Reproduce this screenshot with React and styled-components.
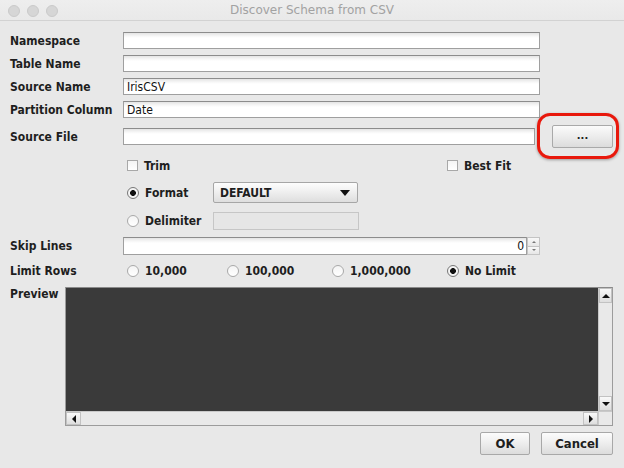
import React from "react";
import styled, { createGlobalStyle } from "styled-components";

const Global = createGlobalStyle`
  html, body { margin: 0; padding: 0; background: #e8e8e8; }
  body { width: 624px; height: 468px; overflow: hidden; }
  * { box-sizing: border-box; }
`;

const UI = `"DejaVu Sans Condensed", "DejaVu Sans", "Liberation Sans", sans-serif`;

const Window = styled.div`
  position: relative;
  width: 624px;
  height: 468px;
  background: #e8e8e8;
  font-family: ${UI};
  font-stretch: condensed;
  color: #1e1e1e;
`;

const TitleBar = styled.div`
  height: 21px;
  display: flex;
  align-items: center;
  justify-content: center;
  position: relative;
  background: linear-gradient(#eeeeee, #e9e9e9);
  border-bottom: 1px solid #d2d2d2;
`;

const Lights = styled.div`
  position: absolute;
  left: 8px;
  top: 5px;
  display: flex;
  gap: 7px;
`;

const Light = styled.span`
  width: 12px;
  height: 12px;
  border-radius: 50%;
  background: #d6d6d6;
  border: 1px solid #cacaca;
`;

const Title = styled.div`
  font-family: "DejaVu Sans", sans-serif;
  font-stretch: normal;
  font-size: 12px;
  color: #a2a2a2;
`;

const Body = styled.div`
  display: flex;
  flex-direction: column;
  padding: 0 11px 0 10px;
`;

const Row = styled.div`
  display: grid;
  grid-template-columns: 113px 1fr;
  align-items: ${(p) => p.$align || "center"};
  height: ${(p) => p.$h}px;
  margin-top: ${(p) => p.$mt}px;
`;

const Label = styled.div`
  font-weight: bold;
  font-size: 12px;
  white-space: nowrap;
  align-self: ${(p) => p.$self || "center"};
`;

const TextField = styled.div`
  width: ${(p) => p.$w}px;
  height: ${(p) => p.$h || 17}px;
  background: linear-gradient(#e4e4e4 0px, #f6f6f6 3px, #ffffff 5px);
  border: 1px solid #9f9f9f;
  border-top-color: #8c8c8c;
  font-size: 12px;
  padding: 0 2px 0 3px;
  display: flex;
  align-items: center;
  justify-content: ${(p) => (p.$right ? "flex-end" : "flex-start")};
  color: #111;
`;

const Inline = styled.div`
  display: flex;
  align-items: center;
  padding-left: ${(p) => p.$pl || 0}px;
`;

const Ellipsis = styled.button`
  position: relative;
  margin-left: 17px;
  width: 61px;
  height: 23px;
  border: 1px solid #a9a9a9;
  border-radius: 2px;
  background: linear-gradient(#fbfbfb, #ececec 50%, #dcdcdc);
  font: bold 10px "DejaVu Sans", sans-serif;
  color: #222;
  padding: 0 0 2px;
`;

const Highlight = styled.span`
  position: absolute;
  left: -16px;
  top: -13px;
  width: 82px;
  height: 46px;
  border: 3px solid #e8180c;
  border-radius: 13px;
  box-shadow: 0 1px 3px rgba(0, 0, 0, 0.35);
  pointer-events: none;
`;

const Options = styled.div`
  display: grid;
  grid-template-columns: ${(p) => p.$cols};
  align-items: center;
  padding-left: 4px;
`;

const Choice = styled.label`
  display: flex;
  align-items: center;
  gap: 6px;
  font-weight: bold;
  font-size: 12px;
  white-space: nowrap;
  width: ${(p) => (p.$w ? `${p.$w}px` : "auto")};
`;

const Box = styled.span`
  width: 11px;
  height: 11px;
  border: 1px solid #a8a8a8;
  background: linear-gradient(#f4f4f4, #ffffff);
`;

const Radio = styled.span`
  width: 12px;
  height: 12px;
  border-radius: 50%;
  border: 1px solid ${(p) => (p.$on ? "#777" : "#a9a9a9")};
  background: ${(p) =>
    p.$on
      ? "radial-gradient(circle, #111 0 2.6px, #f4f4f4 3.2px)"
      : "linear-gradient(#f4f4f4, #ffffff)"};
`;

const Select = styled.div`
  width: 145px;
  height: 21px;
  border: 1px solid #a6a6a6;
  border-radius: 2px;
  background: linear-gradient(#fdfdfd, #eeeeee 50%, #dedede);
  display: flex;
  align-items: center;
  justify-content: space-between;
  padding: 0 7px 0 6px;
  font-weight: bold;
  font-size: 12px;
`;

const Caret = styled.span`
  width: 0;
  height: 0;
  border-left: 5px solid transparent;
  border-right: 5px solid transparent;
  border-top: 6px solid #111;
`;

const Disabled = styled.div`
  width: 146px;
  height: 18px;
  border: 1px solid #c6c6c6;
  background: #e6e6e6;
`;

const SpinWrap = styled.div`
  display: flex;
  align-items: center;
`;

const Spinner = styled.div`
  display: flex;
  flex-direction: column;
  width: 13px;
  height: 18px;
`;

const SpinBtn = styled.div`
  flex: 1;
  border: 1px solid #c4c4c4;
  border-top-width: ${(p) => (p.$down ? 0 : 1)}px;
  background: linear-gradient(#f8f8f8, #e6e6e6);
  display: flex;
  align-items: center;
  justify-content: center;
`;

const Tri = styled.span`
  width: 0;
  height: 0;
  border-left: ${(p) => p.$s}px solid transparent;
  border-right: ${(p) => p.$s}px solid transparent;
  ${(p) => (p.$dir === "up" ? "border-bottom" : "border-top")}: ${(p) => p.$s}px solid
    ${(p) => p.$c || "#111"};
`;

const TriH = styled.span`
  width: 0;
  height: 0;
  border-top: 4px solid transparent;
  border-bottom: 4px solid transparent;
  ${(p) => (p.$dir === "left" ? "border-right" : "border-left")}: 4px solid #111;
`;

const PreviewBox = styled.div`
  width: 548px;
  height: 139px;
  border: 1px solid #9c9c9c;
  border-top-color: #8a8a8a;
  display: grid;
  grid-template-columns: 1fr 14px;
  grid-template-rows: 1fr 14px;
  margin-left: -58px;
`;

const Dark = styled.div`
  background: #3a3a3a;
`;

const VScroll = styled.div`
  background: #e9e9e9;
  border-left: 1px solid #c9c9c9;
  display: flex;
  flex-direction: column;
  justify-content: space-between;
`;

const HScroll = styled.div`
  background: #e9e9e9;
  border-top: 1px solid #c9c9c9;
  display: flex;
  justify-content: space-between;
`;

const Corner = styled.div`
  background: #e9e9e9;
  border-top: 1px solid #c9c9c9;
  border-left: 1px solid #c9c9c9;
`;

const ArrowBtn = styled.div`
  width: ${(p) => (p.$v ? "13px" : "15px")};
  height: ${(p) => (p.$v ? "15px" : "13px")};
  background: linear-gradient(#f9f9f9, #dedede);
  border: 1px solid #c2c2c2;
  display: flex;
  align-items: center;
  justify-content: center;
`;

const Footer = styled.div`
  display: flex;
  justify-content: flex-end;
  gap: 11px;
  margin-top: 6px;
  height: 23px;
`;

const Btn = styled.button`
  width: ${(p) => p.$w}px;
  height: 23px;
  border: 1px solid #a8a8a8;
  border-radius: 2px;
  background: linear-gradient(#fcfcfc, #ededed 50%, #dcdcdc);
  font-family: ${UI};
  font-stretch: condensed;
  font-weight: bold;
  font-size: 13px;
  color: #1e1e1e;
  padding: 0;
`;

export default function App() {
  return (
    <Window>
      <Global />
      <TitleBar>
        <Lights>
          <Light />
          <Light />
          <Light />
        </Lights>
        <Title>Discover Schema from CSV</Title>
      </TitleBar>
      <Body>
        <Row $h={17} $mt={11}>
          <Label>Namespace</Label>
          <TextField $w={417} />
        </Row>
        <Row $h={17} $mt={6}>
          <Label>Table Name</Label>
          <TextField $w={417} />
        </Row>
        <Row $h={17} $mt={6}>
          <Label>Source Name</Label>
          <TextField $w={417}>IrisCSV</TextField>
        </Row>
        <Row $h={17} $mt={6}>
          <Label>Partition Column</Label>
          <TextField $w={417}>Date</TextField>
        </Row>
        <Row $h={23} $mt={7}>
          <Label>Source File</Label>
          <Inline>
            <TextField $w={412} />
            <Ellipsis>
              ...
              <Highlight />
            </Ellipsis>
          </Inline>
        </Row>
        <Row $h={15} $mt={10}>
          <span />
          <Options $cols="320px auto">
            <Choice>
              <Box />
              Trim
            </Choice>
            <Choice>
              <Box />
              Best Fit
            </Choice>
          </Options>
        </Row>
        <Row $h={21} $mt={9}>
          <span />
          <Inline $pl={4}>
            <Choice $w={86}>
              <Radio $on />
              Format
            </Choice>
            <Select>
              DEFAULT
              <Caret />
            </Select>
          </Inline>
        </Row>
        <Row $h={18} $mt={9}>
          <span />
          <Inline $pl={4}>
            <Choice $w={86}>
              <Radio />
              Delimiter
            </Choice>
            <Disabled />
          </Inline>
        </Row>
        <Row $h={18} $mt={7}>
          <Label>Skip Lines</Label>
          <SpinWrap>
            <TextField $w={404} $h={18} $right>
              0
            </TextField>
            <Spinner>
              <SpinBtn>
                <Tri $dir="up" $s={2} $c="#777" />
              </SpinBtn>
              <SpinBtn $down>
                <Tri $dir="down" $s={2} $c="#777" />
              </SpinBtn>
            </Spinner>
          </SpinWrap>
        </Row>
        <Row $h={16} $mt={8}>
          <Label>Limit Rows</Label>
          <Options $cols="100px 105px 115px auto">
            <Choice>
              <Radio />
              10,000
            </Choice>
            <Choice>
              <Radio />
              100,000
            </Choice>
            <Choice>
              <Radio />
              1,000,000
            </Choice>
            <Choice>
              <Radio $on />
              No Limit
            </Choice>
          </Options>
        </Row>
        <Row $h={139} $mt={8} $align="start">
          <Label $self="start">Preview</Label>
          <PreviewBox>
            <Dark />
            <VScroll>
              <ArrowBtn $v>
                <Tri $dir="up" $s={4} />
              </ArrowBtn>
              <ArrowBtn $v>
                <Tri $dir="down" $s={4} />
              </ArrowBtn>
            </VScroll>
            <HScroll>
              <ArrowBtn>
                <TriH $dir="left" />
              </ArrowBtn>
              <ArrowBtn>
                <TriH $dir="right" />
              </ArrowBtn>
            </HScroll>
            <Corner />
          </PreviewBox>
        </Row>
        <Footer>
          <Btn $w={50}>OK</Btn>
          <Btn $w={72}>Cancel</Btn>
        </Footer>
      </Body>
    </Window>
  );
}
